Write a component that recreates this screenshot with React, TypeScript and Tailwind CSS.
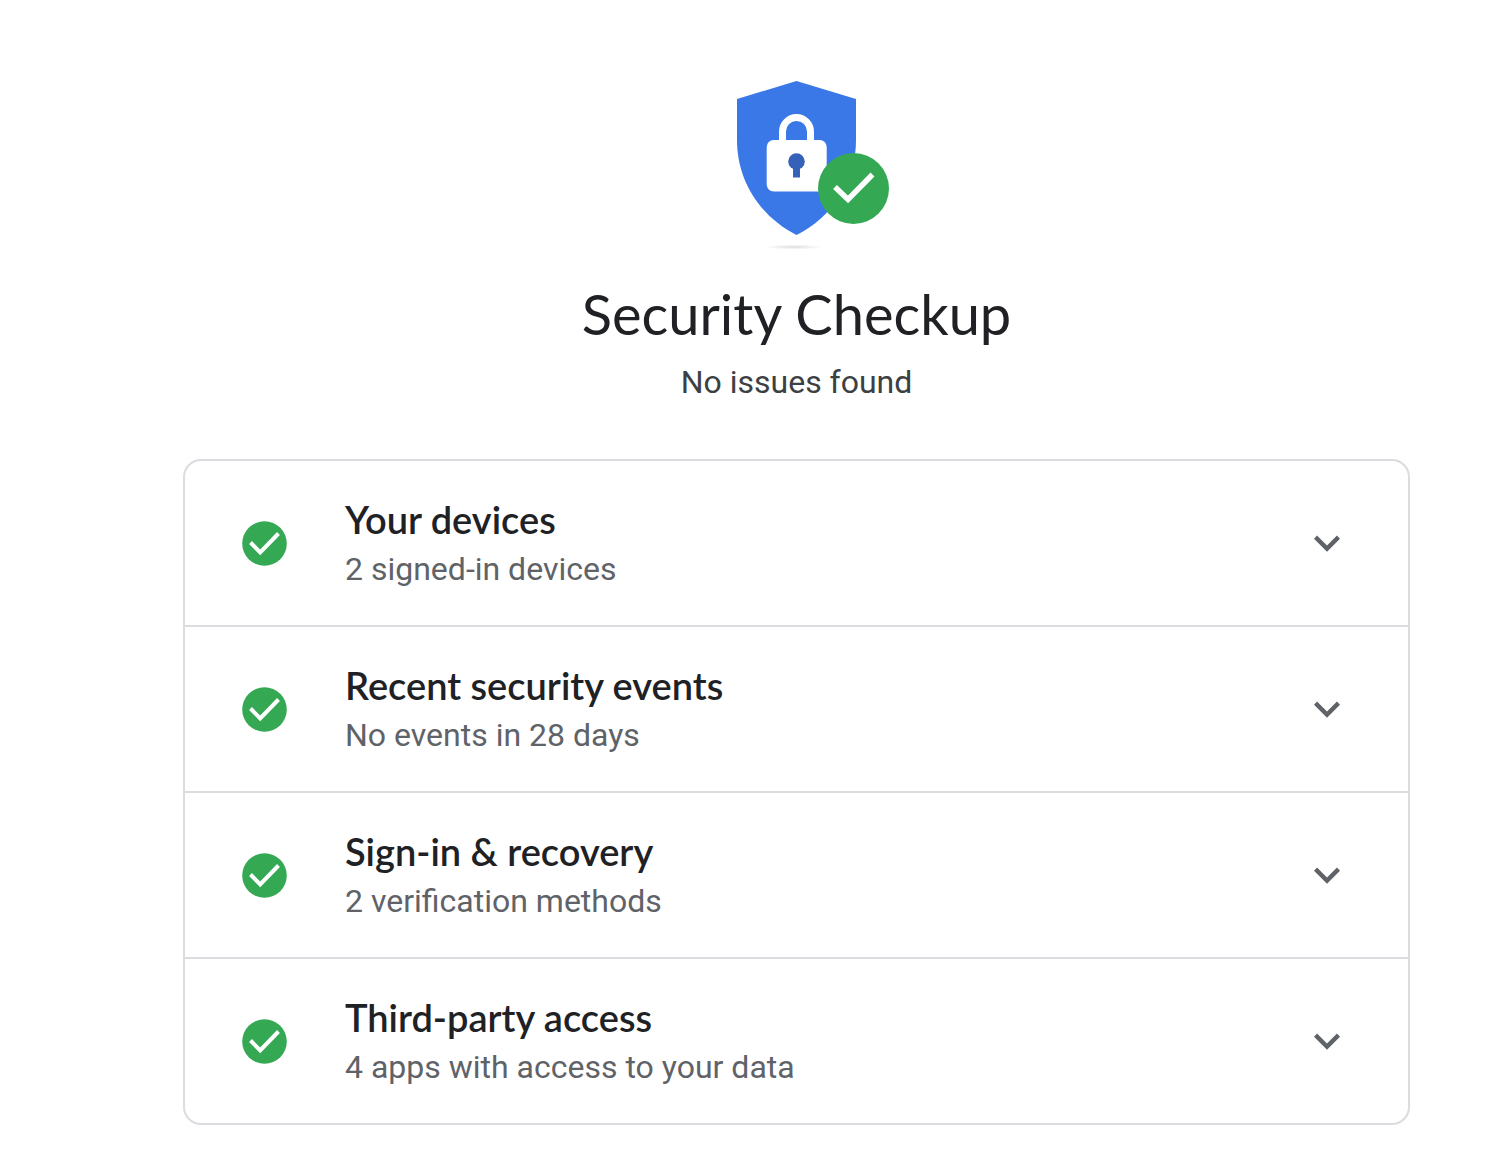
const sections = [
    { title: "Your devices", detail: "2 signed-in devices" },
    { title: "Recent security events", detail: "No events in 28 days" },
    { title: "Sign-in & recovery", detail: "2 verification methods" },
    { title: "Third-party access", detail: "4 apps with access to your data" },
];

function ShieldLogo() {
    return (
        <svg className="w-[190px] h-[190px]" viewBox="-18 0 190 190" aria-hidden="true">
            <defs>
                <radialGradient id="shadow">
                    <stop offset="0" stopColor="#dedede" />
                    <stop offset="1" stopColor="#ffffff" />
                </radialGradient>
            </defs>
            <ellipse cx="74" cy="177" rx="29" ry="2.5" fill="url(#shadow)" />
            <path d="M76.5 11 136 29v41c0 42-24 77-59.5 95C41 147 17 112 17 70V29z" fill="#3b78e7" />
            <path d="M62.5 72V61.500a14 14 0 0 1 28 0V72" fill="none" stroke="#fff" strokeWidth="7" />
            <rect x="46.700" y="70" width="60" height="51.500" rx="7" fill="#fff" />
            <circle cx="76.500" cy="91.500" r="8.300" fill="#3562b8" />
            <path d="M73 96h7v11.500h-7z" fill="#3562b8" />
            <circle cx="133.500" cy="118.500" r="35.500" fill="#34a853" />
            <path d="M115 117 128 129.500 152.500 104.500" fill="none" stroke="#fff" strokeWidth="5.500" />
        </svg>
    );
}

function CheckIcon() {
    return (
        <svg className="w-[45px] h-[45px] shrink-0" viewBox="0 0 45 45" aria-hidden="true">
            <circle cx="22.500" cy="22.500" r="22.300" fill="#34a853" />
            <path d="M8.500 21.500 18.200 31.300 36.500 12.500" fill="none" stroke="#fff" strokeWidth="4" />
        </svg>
    );
}

function ChevronIcon() {
    return (
        <svg className="w-[52px] h-[52px] shrink-0" viewBox="0 0 24 24" aria-hidden="true">
            <path d="M16.590 8.590 12 13.170 7.410 8.590 6 10l6 6 6-6z" fill="#5f6368" />
        </svg>
    );
}

function App() {
    return (
        <main className="bg-white pt-[70px] pb-8 pl-[183px] pr-[101px] font-['Roboto',sans-serif]">
            <header className="flex flex-col items-center text-center">
                <ShieldLogo />
                <h1 className="mt-[22px] text-[56px] leading-[64px] text-[#202124] font-['Lato',sans-serif]">Security Checkup</h1>
                <p className="mt-3 text-[32px] leading-[48px] text-[#3c4043]">No issues found</p>
            </header>

            <ul className="mt-[53px] border-2 border-[#dadce0] rounded-[18px] divide-y-2 divide-[#dadce0]">
                {sections.map((section) => (
                    <li key={section.title}>
                        <button type="button" className="w-full flex items-center text-left pl-[57px] pr-[55px] py-8">
                            <CheckIcon />
                            <span className="ml-[58px] flex-1 flex flex-col">
                                <span className="text-[38px] leading-[52px] font-semibold text-[#202124] font-['Lato',sans-serif]">{section.title}</span>
                                <span className="text-[32px] leading-[48px] text-[#5f6368]">{section.detail}</span>
                            </span>
                            <ChevronIcon />
                        </button>
                    </li>
                ))}
            </ul>
        </main>
    );
}

export default App;
